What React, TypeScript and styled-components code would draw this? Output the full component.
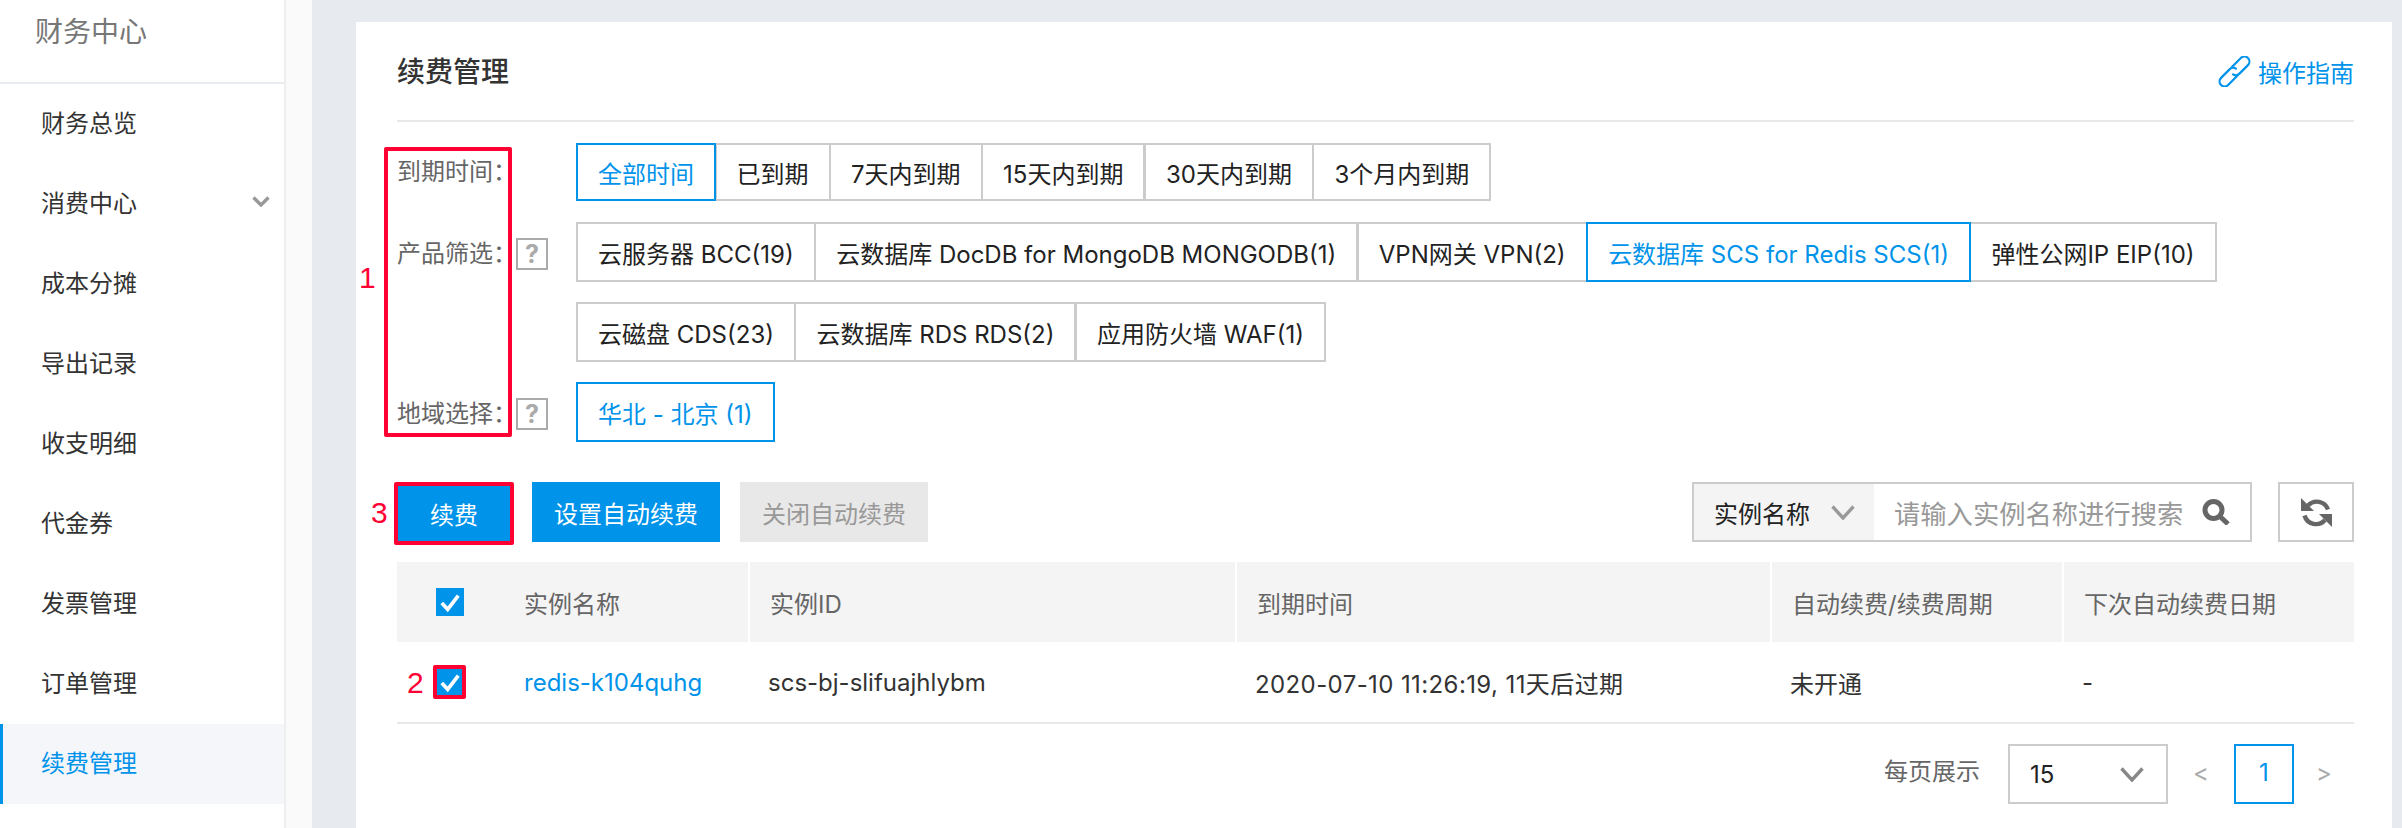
import React from "react";
import styled, { createGlobalStyle } from "styled-components";

const BLUE = "#0093ea";
const RED = "#ff0033";
const LINE = "#cccccc";

const Global = createGlobalStyle`
  html, body { margin: 0; padding: 0; background: #fff; }
  body {
    font-family: Inter, "Noto Sans CJK SC", sans-serif;
    font-size: 24px;
    color: #333;
  }
  * { box-sizing: border-box; }
`;

const Page = styled.div`
  display: flex;
  width: 2402px;
  height: 828px;
  overflow: hidden;
`;

const Sidebar = styled.aside`
  flex: none;
  width: 286px;
  border-right: 2px solid #eeeeee;
  background: #fff;
`;

const SideTitle = styled.div`
  height: 84px;
  padding: 14px 0 0 35px;
  border-bottom: 2px solid #e8ecf0;
  font-size: 28px;
  line-height: 36px;
  color: #777;
`;

const SideItem = styled.div<{ $active?: boolean }>`
  display: flex;
  align-items: center;
  justify-content: space-between;
  height: 80px;
  padding: 0 14px 6px ${(p) => (p.$active ? 38 : 41)}px;
  color: ${(p) => (p.$active ? BLUE : "#333")};
  background: ${(p) => (p.$active ? "#f4f6fa" : "transparent")};
  border-left: ${(p) => (p.$active ? `3px solid ${BLUE}` : "none")};
`;

const Gutter = styled.div`
  flex: none;
  width: 26px;
  background: #fafafa;
`;

const Main = styled.main`
  flex: 1;
  padding: 22px 10px 0 44px;
  background: #e7ebef;
`;

const Card = styled.section`
  height: 100%;
  padding: 0 38px 0 41px;
  background: #fff;
`;

const CardHead = styled.header`
  display: flex;
  align-items: center;
  justify-content: space-between;
  height: 100px;
  border-bottom: 2px solid #e8e8e8;
`;

const Title = styled.h1`
  margin: 0;
  padding-top: 2px;
  font-size: 28px;
  font-weight: 500;
  line-height: 36px;
  color: #333;
`;

const GuideLink = styled.a`
  display: flex;
  align-items: center;
  gap: 7px;
  color: ${BLUE};
`;

const Filters = styled.div`
  position: relative;
  display: flex;
  flex-direction: column;
  gap: 20px;
  margin-top: 21px;
`;

const FilterRow = styled.div<{ $min?: number }>`
  display: flex;
  align-items: flex-start;
  min-height: ${(p) => p.$min ?? 60}px;
`;

const FilterLabel = styled.div<{ $top: number }>`
  flex: none;
  display: flex;
  align-items: center;
  gap: 5px;
  width: 179px;
  padding-top: ${(p) => p.$top}px;
  line-height: 32px;
  color: #666;
`;

const LabelText = styled.span`
  width: 114px;
  white-space: nowrap;
`;

const Help = styled.span`
  display: flex;
  align-items: center;
  justify-content: center;
  width: 32px;
  height: 32px;
  border: 2px solid #aaa;
  font-size: 25px;
  font-weight: 700;
  color: #aaa;
`;

const SegGroup = styled.div`
  display: flex;
  flex-wrap: wrap;
  gap: 20px 0;
  width: 1700px;
`;

const Seg = styled.button<{ $active?: boolean; $short?: boolean }>`
  position: relative;
  z-index: ${(p) => (p.$active ? 1 : 0)};
  height: ${(p) => (p.$short ? 58 : 60)}px;
  margin-right: -1.5px;
  padding: 0 20px;
  border: 2px solid ${(p) => (p.$active ? BLUE : LINE)};
  background: #fff;
  color: ${(p) => (p.$active ? BLUE : "#222")};
  font: inherit;
  white-space: nowrap;
`;

const LabelsHighlight = styled.div`
  position: absolute;
  left: -13px;
  top: 4px;
  width: 128px;
  height: 290px;
  border: 4px solid ${RED};
  border-radius: 2px;
`;

const Mark = styled.span<{ $x: number; $y: number }>`
  position: absolute;
  left: ${(p) => p.$x}px;
  top: ${(p) => p.$y}px;
  font-family: "Liberation Sans", sans-serif;
  font-size: 30px;
  line-height: 30px;
  color: ${RED};
`;

const Toolbar = styled.div`
  position: relative;
  display: flex;
  align-items: flex-start;
  height: 63px;
  margin-top: 40px;
`;

const PrimaryButton = styled.button<{ $marked?: boolean }>`
  flex: none;
  height: ${(p) => (p.$marked ? 63 : 60)}px;
  width: ${(p) => (p.$marked ? 120 : 188)}px;
  margin: 0 ${(p) => (p.$marked ? 18 : 20)}px 0 ${(p) => (p.$marked ? -3 : 0)}px;
  padding: 0;
  border: ${(p) => (p.$marked ? `4px solid ${RED}` : "none")};
  border-radius: ${(p) => (p.$marked ? 2 : 0)}px;
  background: ${BLUE};
  color: #fff;
  font: inherit;
`;

const DisabledButton = styled.button`
  flex: none;
  width: 188px;
  height: 60px;
  padding: 0;
  border: none;
  background: #e8e8e8;
  color: #999;
  font: inherit;
`;

const Spacer = styled.div`
  flex: 1;
`;

const SearchBox = styled.div`
  display: flex;
  align-items: center;
  width: 560px;
  height: 60px;
  border: 2px solid ${LINE};
`;

const SearchField = styled.div`
  flex: none;
  display: flex;
  align-items: center;
  justify-content: space-between;
  width: 180px;
  height: 100%;
  padding: 0 19px 0 20px;
  background: #f4f4f4;
  color: #222;
`;

const Placeholder = styled.div`
  flex: 1;
  padding-left: 20px;
  font-size: 26.3px;
  color: #999;
  white-space: nowrap;
`;

const SearchIconBox = styled.div`
  display: flex;
  padding-right: 20px;
`;

const RefreshButton = styled.button`
  display: flex;
  align-items: center;
  justify-content: center;
  width: 76px;
  height: 60px;
  margin-left: 26px;
  padding: 0;
  border: 2px solid ${LINE};
  background: #fff;
`;

const Grid = styled.div`
  display: grid;
  grid-template-columns: 353px 487px 535px 292px 290px;
`;

const HeadRow = styled(Grid)`
  height: 80px;
  margin-top: 17px;
`;

const HeadCell = styled.div`
  display: flex;
  align-items: center;
  padding-left: 20px;
  border-right: 2px solid #fff;
  background: #f4f4f4;
  color: #666;

  &:last-child {
    border-right: none;
  }
`;

const FirstHeadCell = styled(HeadCell)`
  padding-left: 39px;
`;

const BodyRow = styled(Grid)`
  position: relative;
  height: 82px;
  border-bottom: 2px solid #e8e8e8;
`;

const BodyCell = styled.div<{ $spaced?: boolean }>`
  display: flex;
  align-items: center;
  padding: 0 0 0 18px;
  color: #333;
  letter-spacing: ${(p) => (p.$spaced ? "0.4px" : "normal")};
`;

const FirstBodyCell = styled(BodyCell)`
  padding-left: 36px;
`;

const Check = styled.span<{ $marked?: boolean }>`
  flex: none;
  display: flex;
  align-items: center;
  justify-content: center;
  width: ${(p) => (p.$marked ? 33 : 28)}px;
  height: ${(p) => (p.$marked ? 34 : 28)}px;
  margin-right: ${(p) => (p.$marked ? 58 : 60)}px;
  border: ${(p) => (p.$marked ? `4px solid ${RED}` : "none")};
  border-radius: ${(p) => (p.$marked ? 2 : 0)}px;
  background: ${BLUE};
`;

const InstanceLink = styled.a`
  color: ${BLUE};
`;

const Pager = styled.nav`
  display: flex;
  align-items: flex-start;
  height: 60px;
  margin-top: 20px;
  justify-content: flex-end;
`;

const PagerLabel = styled.span`
  height: 56px;
  line-height: 56px;
  margin-right: 28px;
  color: #666;
`;

const SizeSelect = styled.div`
  display: flex;
  align-items: center;
  justify-content: space-between;
  width: 160px;
  height: 60px;
  padding: 0 22px 0 20px;
  border: 2px solid ${LINE};
  color: #222;
`;

const PageArrow = styled.span<{ $w: number }>`
  width: ${(p) => p.$w}px;
  height: 60px;
  line-height: 58px;
  text-align: center;
  color: #aaa;
`;

const PageNum = styled.span`
  width: 60px;
  height: 60px;
  line-height: 54px;
  text-align: center;
  border: 2px solid ${BLUE};
  color: ${BLUE};
`;

const Chevron = ({ w, h, color = "#999" }: { w: number; h: number; color?: string }) => (
  <svg width={w} height={h} viewBox={`0 0 ${w} ${h}`} fill="none">
    <polyline points={`1.5,1.5 ${w / 2},${h - 2} ${w - 1.5},1.5`} stroke={color} strokeWidth="3.4" />
  </svg>
);

const Tick = ({ size }: { size: number }) => (
  <svg width={size} height={size} viewBox="0 0 24 24" fill="none">
    <polyline points="3,13 9.5,20 21,5" stroke="#fff" strokeWidth="4" />
  </svg>
);

const ChainIcon = () => (
  <svg width="33" height="31" viewBox="-16.5 -15.5 33 31" fill="none" stroke={BLUE} strokeWidth="2.2" strokeLinecap="round">
    <g transform="rotate(-45)">
      <path d="M-1 5 H-14 A5 5 0 0 1 -14 -5 H-2 A5 5 0 0 1 3 -1" />
      <path d="M1 -5 H14 A5 5 0 0 1 14 5 H2 A5 5 0 0 1 -3 1" />
    </g>
  </svg>
);

const SearchGlyph = () => (
  <svg width="28" height="26" viewBox="0 0 28 26" fill="none" stroke="#666">
    <circle cx="11.5" cy="11" r="8.5" strokeWidth="5" />
    <line x1="17.5" y1="17" x2="26" y2="25" strokeWidth="5" />
  </svg>
);

const RefreshGlyph = () => (
  <svg width="33" height="33" viewBox="0 0 33 33" fill="none">
    <path d="M8 9.5 A12 12 0 0 1 28 13.5" stroke="#666" strokeWidth="4.4" />
    <path d="M4.5 19.5 A12 12 0 0 0 25 24" stroke="#666" strokeWidth="4.4" />
    <polygon points="1,2 1,15 14,15" fill="#666" />
    <polygon points="32,31 32,18 19,18" fill="#666" />
  </svg>
);

const navItems = ["财务总览", "消费中心", "成本分摊", "导出记录", "收支明细", "代金券", "发票管理", "订单管理", "续费管理"];
const timeOptions = ["全部时间", "已到期", "7天内到期", "15天内到期", "30天内到期", "3个月内到期"];
const productOptions = [
  "云服务器 BCC(19)",
  "云数据库 DocDB for MongoDB MONGODB(1)",
  "VPN网关 VPN(2)",
  "云数据库 SCS for Redis SCS(1)",
  "弹性公网IP EIP(10)",
  "云磁盘 CDS(23)",
  "云数据库 RDS RDS(2)",
  "应用防火墙 WAF(1)",
];
const headers = ["实例ID", "到期时间", "自动续费/续费周期", "下次自动续费日期"];
const cells = ["scs-bj-slifuajhlybm", "2020-07-10 11:26:19, 11天后过期", "未开通", "-"];

export default function App() {
  return (
    <Page>
      <Global />
      <Sidebar>
        <SideTitle>财务中心</SideTitle>
        {navItems.map((item) => (
          <SideItem key={item} $active={item === "续费管理"}>
            {item}
            {item === "消费中心" && <Chevron w={18} h={11} />}
          </SideItem>
        ))}
      </Sidebar>
      <Gutter />
      <Main>
        <Card>
          <CardHead>
            <Title>续费管理</Title>
            <GuideLink>
              <ChainIcon />
              操作指南
            </GuideLink>
          </CardHead>

          <Filters>
            <FilterRow $min={59}>
              <FilterLabel $top={13}><LabelText>到期时间：</LabelText></FilterLabel>
              <SegGroup>
                {timeOptions.map((o) => (
                  <Seg key={o} $short $active={o === "全部时间"}>{o}</Seg>
                ))}
              </SegGroup>
            </FilterRow>
            <FilterRow>
              <FilterLabel $top={16}><LabelText>产品筛选：</LabelText><Help>?</Help></FilterLabel>
              <SegGroup>
                {productOptions.map((o) => (
                  <Seg key={o} $active={o.includes("SCS")}>{o}</Seg>
                ))}
              </SegGroup>
            </FilterRow>
            <FilterRow>
              <FilterLabel $top={16}><LabelText>地域选择：</LabelText><Help>?</Help></FilterLabel>
              <SegGroup>
                <Seg $active>华北 - 北京 (1)</Seg>
              </SegGroup>
            </FilterRow>
            <LabelsHighlight />
            <Mark $x={-38} $y={120}>1</Mark>
          </Filters>

          <Toolbar>
            <Mark $x={-26} $y={16}>3</Mark>
            <PrimaryButton $marked>续费</PrimaryButton>
            <PrimaryButton>设置自动续费</PrimaryButton>
            <DisabledButton>关闭自动续费</DisabledButton>
            <Spacer />
            <SearchBox>
              <SearchField>
                实例名称
                <Chevron w={24} h={15} />
              </SearchField>
              <Placeholder>请输入实例名称进行搜索</Placeholder>
              <SearchIconBox><SearchGlyph /></SearchIconBox>
            </SearchBox>
            <RefreshButton><RefreshGlyph /></RefreshButton>
          </Toolbar>

          <HeadRow>
            <FirstHeadCell>
              <Check><Tick size={22} /></Check>
              实例名称
            </FirstHeadCell>
            {headers.map((h) => (
              <HeadCell key={h}>{h}</HeadCell>
            ))}
          </HeadRow>
          <BodyRow>
            <Mark $x={10} $y={26}>2</Mark>
            <FirstBodyCell>
              <Check $marked><Tick size={22} /></Check>
              <InstanceLink>redis-k104quhg</InstanceLink>
            </FirstBodyCell>
            {cells.map((c) => (
              <BodyCell key={c} $spaced={c.startsWith("2020")}>{c}</BodyCell>
            ))}
          </BodyRow>

          <Pager>
            <PagerLabel>每页展示</PagerLabel>
            <SizeSelect>
              15
              <Chevron w={24} h={15} color="#888" />
            </SizeSelect>
            <PageArrow $w={66}>&lt;</PageArrow>
            <PageNum>1</PageNum>
            <PageArrow $w={60}>&gt;</PageArrow>
          </Pager>
        </Card>
      </Main>
    </Page>
  );
}
